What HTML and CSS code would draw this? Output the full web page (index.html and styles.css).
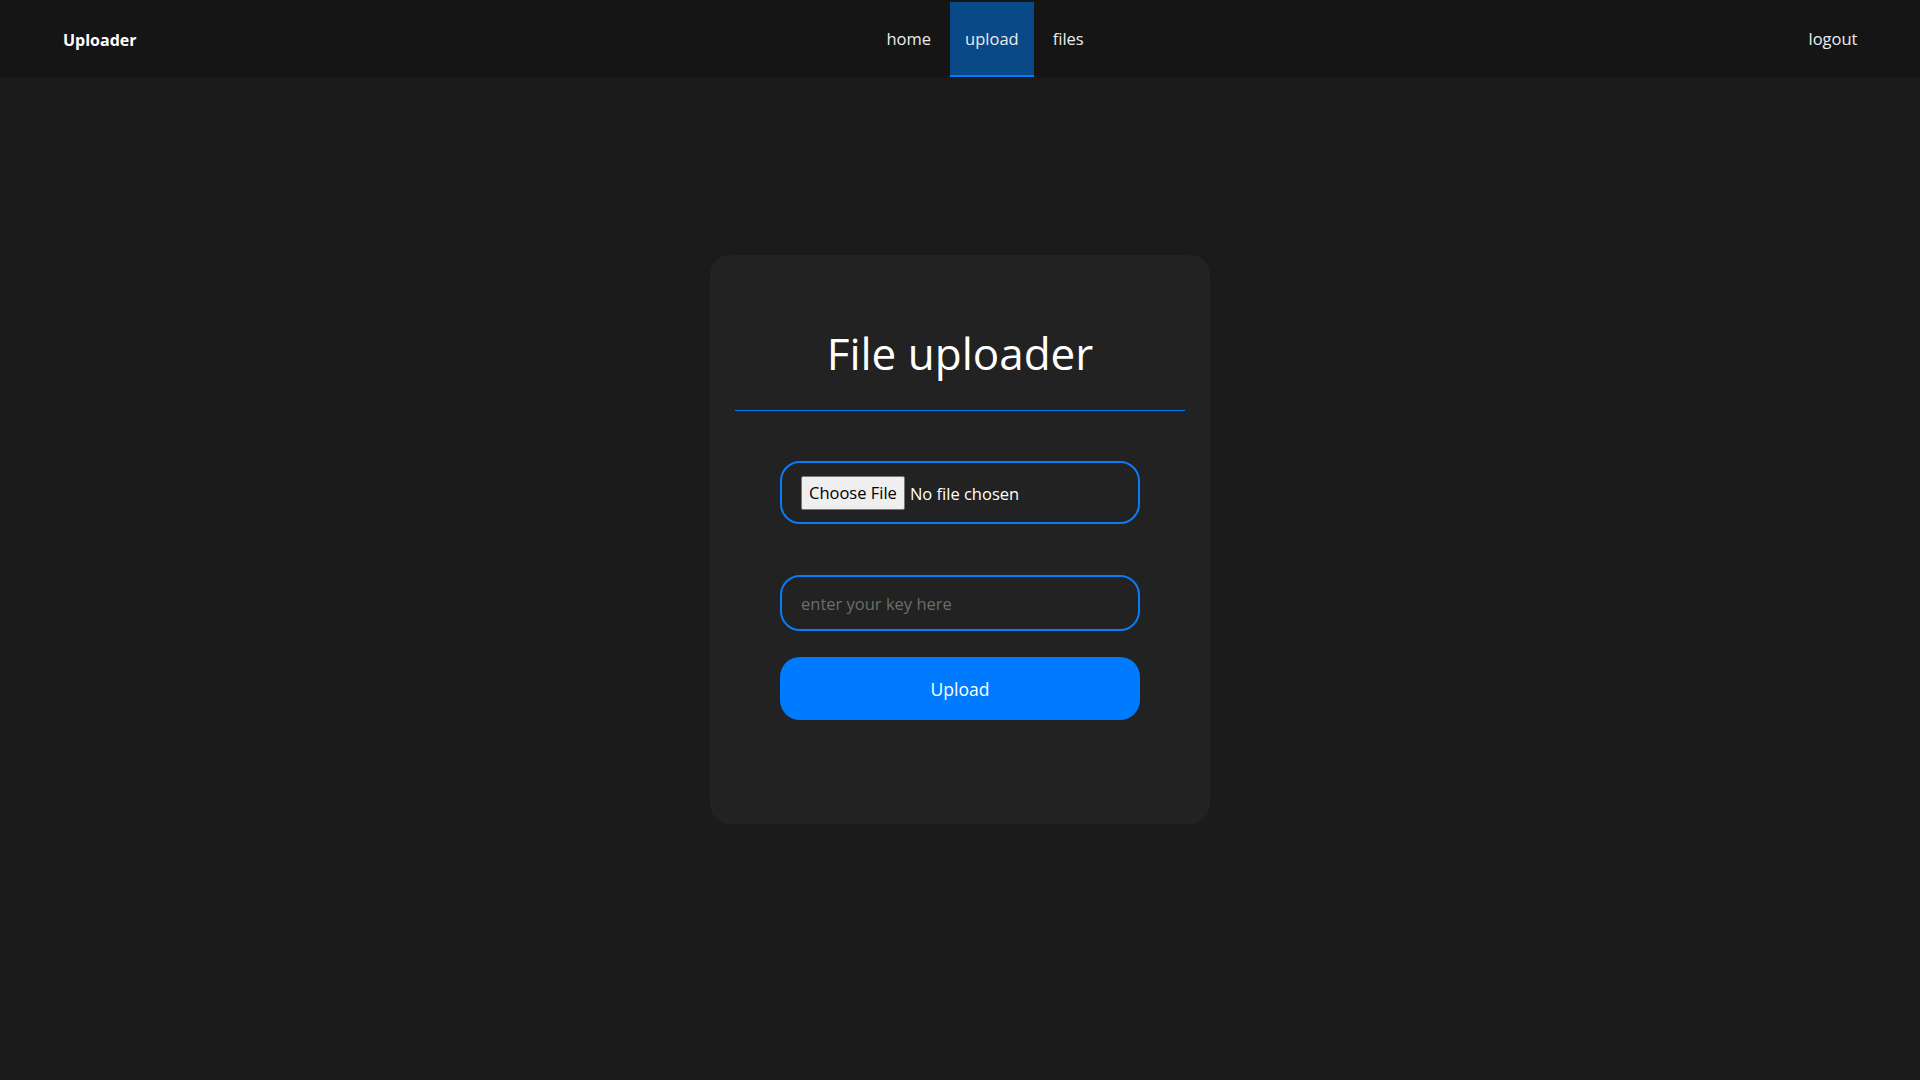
FILE: index.html
```html
<!DOCTYPE html>
<html lang="en">
<head>
<meta charset="utf-8">
<title>Uploader</title>
<link rel="stylesheet" href="styles.css">
</head>
<body>
<nav class="navbar">
  <div class="brand-wrap"><a class="brand" href="#">Uploader</a></div>
  <div class="nav-links">
    <a class="nav-link" href="#">home</a>
    <a class="nav-link active" href="#">upload</a>
    <a class="nav-link" href="#">files</a>
  </div>
  <a class="nav-link logout" href="#">logout</a>
</nav>
<main class="main">
  <form class="card">
    <h1 class="title">File uploader</h1>
    <hr class="divider">
    <div class="file-box">
      <input class="file-input" type="file">
    </div>
    <input class="key-input" type="text" placeholder="enter your key here">
    <button class="upload-btn" type="button">Upload</button>
  </form>
</main>
</body>
</html>
```
FILE: styles.css
```css
* { box-sizing: border-box; }
html, body { margin: 0; padding: 0; }
body {
  background: #1b1b1b;
  font-family: "Open Sans", "Noto Sans", sans-serif;
  color: #fff;
  min-height: 1080px;
}
a { text-decoration: none; }

.navbar {
  display: flex;
  align-items: stretch;
  height: 78px;
  padding: 2px 47px 1px 63px;
  background: #151515;
}
.brand-wrap {
  width: 808px;
  display: flex;
  align-items: center;
}
.brand {
  color: #fff;
  font-weight: 700;
  font-size: 16px;
}
.nav-links {
  display: flex;
  gap: 3px;
}
.nav-link {
  display: flex;
  align-items: center;
  padding: 0 15.5px;
  color: #ececec;
  font-size: 16.5px;
  border-bottom: 2px solid transparent;
}
.nav-link.active {
  background: #0a4987;
  border-bottom-color: #007bff;
}
.logout { margin-left: auto; }

.main {
  display: flex;
  justify-content: center;
  padding-top: 177px;
}
.card {
  width: 500px;
  height: 569px;
  background: #222222;
  border-radius: 20px;
  padding: 68px 25px 0;
  display: flex;
  flex-direction: column;
  align-items: center;
}
.title {
  margin: 0;
  font-size: 44px;
  font-weight: 400;
  line-height: 61px;
  color: #fff;
}
.divider {
  align-self: stretch;
  margin: 26px 0 0;
  border: 0;
  height: 1px;
  background: #007bff;
}
.file-box {
  margin-top: 50px;
  width: 360px;
  height: 63px;
  border: 2px solid #0a7cf5;
  border-radius: 20px;
  padding: 0 19px;
  display: flex;
  align-items: center;
}
.file-input {
  font-family: "Open Sans", "Noto Sans", sans-serif;
  font-size: 16.5px;
  color: #fff;
}
.file-input::file-selector-button {
  font-family: "Open Sans", "Noto Sans", sans-serif;
  font-size: 16.5px;
  height: 34px;
  padding: 0 7px;
  margin-right: 5px;
  background: #efefef;
  color: #000;
  border: 1px solid #767676;
  border-radius: 2px;
}
.key-input {
  margin-top: 51px;
  width: 360px;
  height: 56px;
  border: 2px solid #0a7cf5;
  border-radius: 20px;
  background: transparent;
  padding: 0 19px;
  font-family: "Open Sans", "Noto Sans", sans-serif;
  font-size: 16.5px;
  color: #fff;
  outline: none;
}
.key-input::placeholder { color: #6d6d6d; }
.upload-btn {
  margin-top: 26px;
  width: 360px;
  height: 63px;
  border: 0;
  border-radius: 20px;
  background: #007bff;
  color: #fff;
  font-family: "Open Sans", "Noto Sans", sans-serif;
  font-size: 17.5px;
}
```
